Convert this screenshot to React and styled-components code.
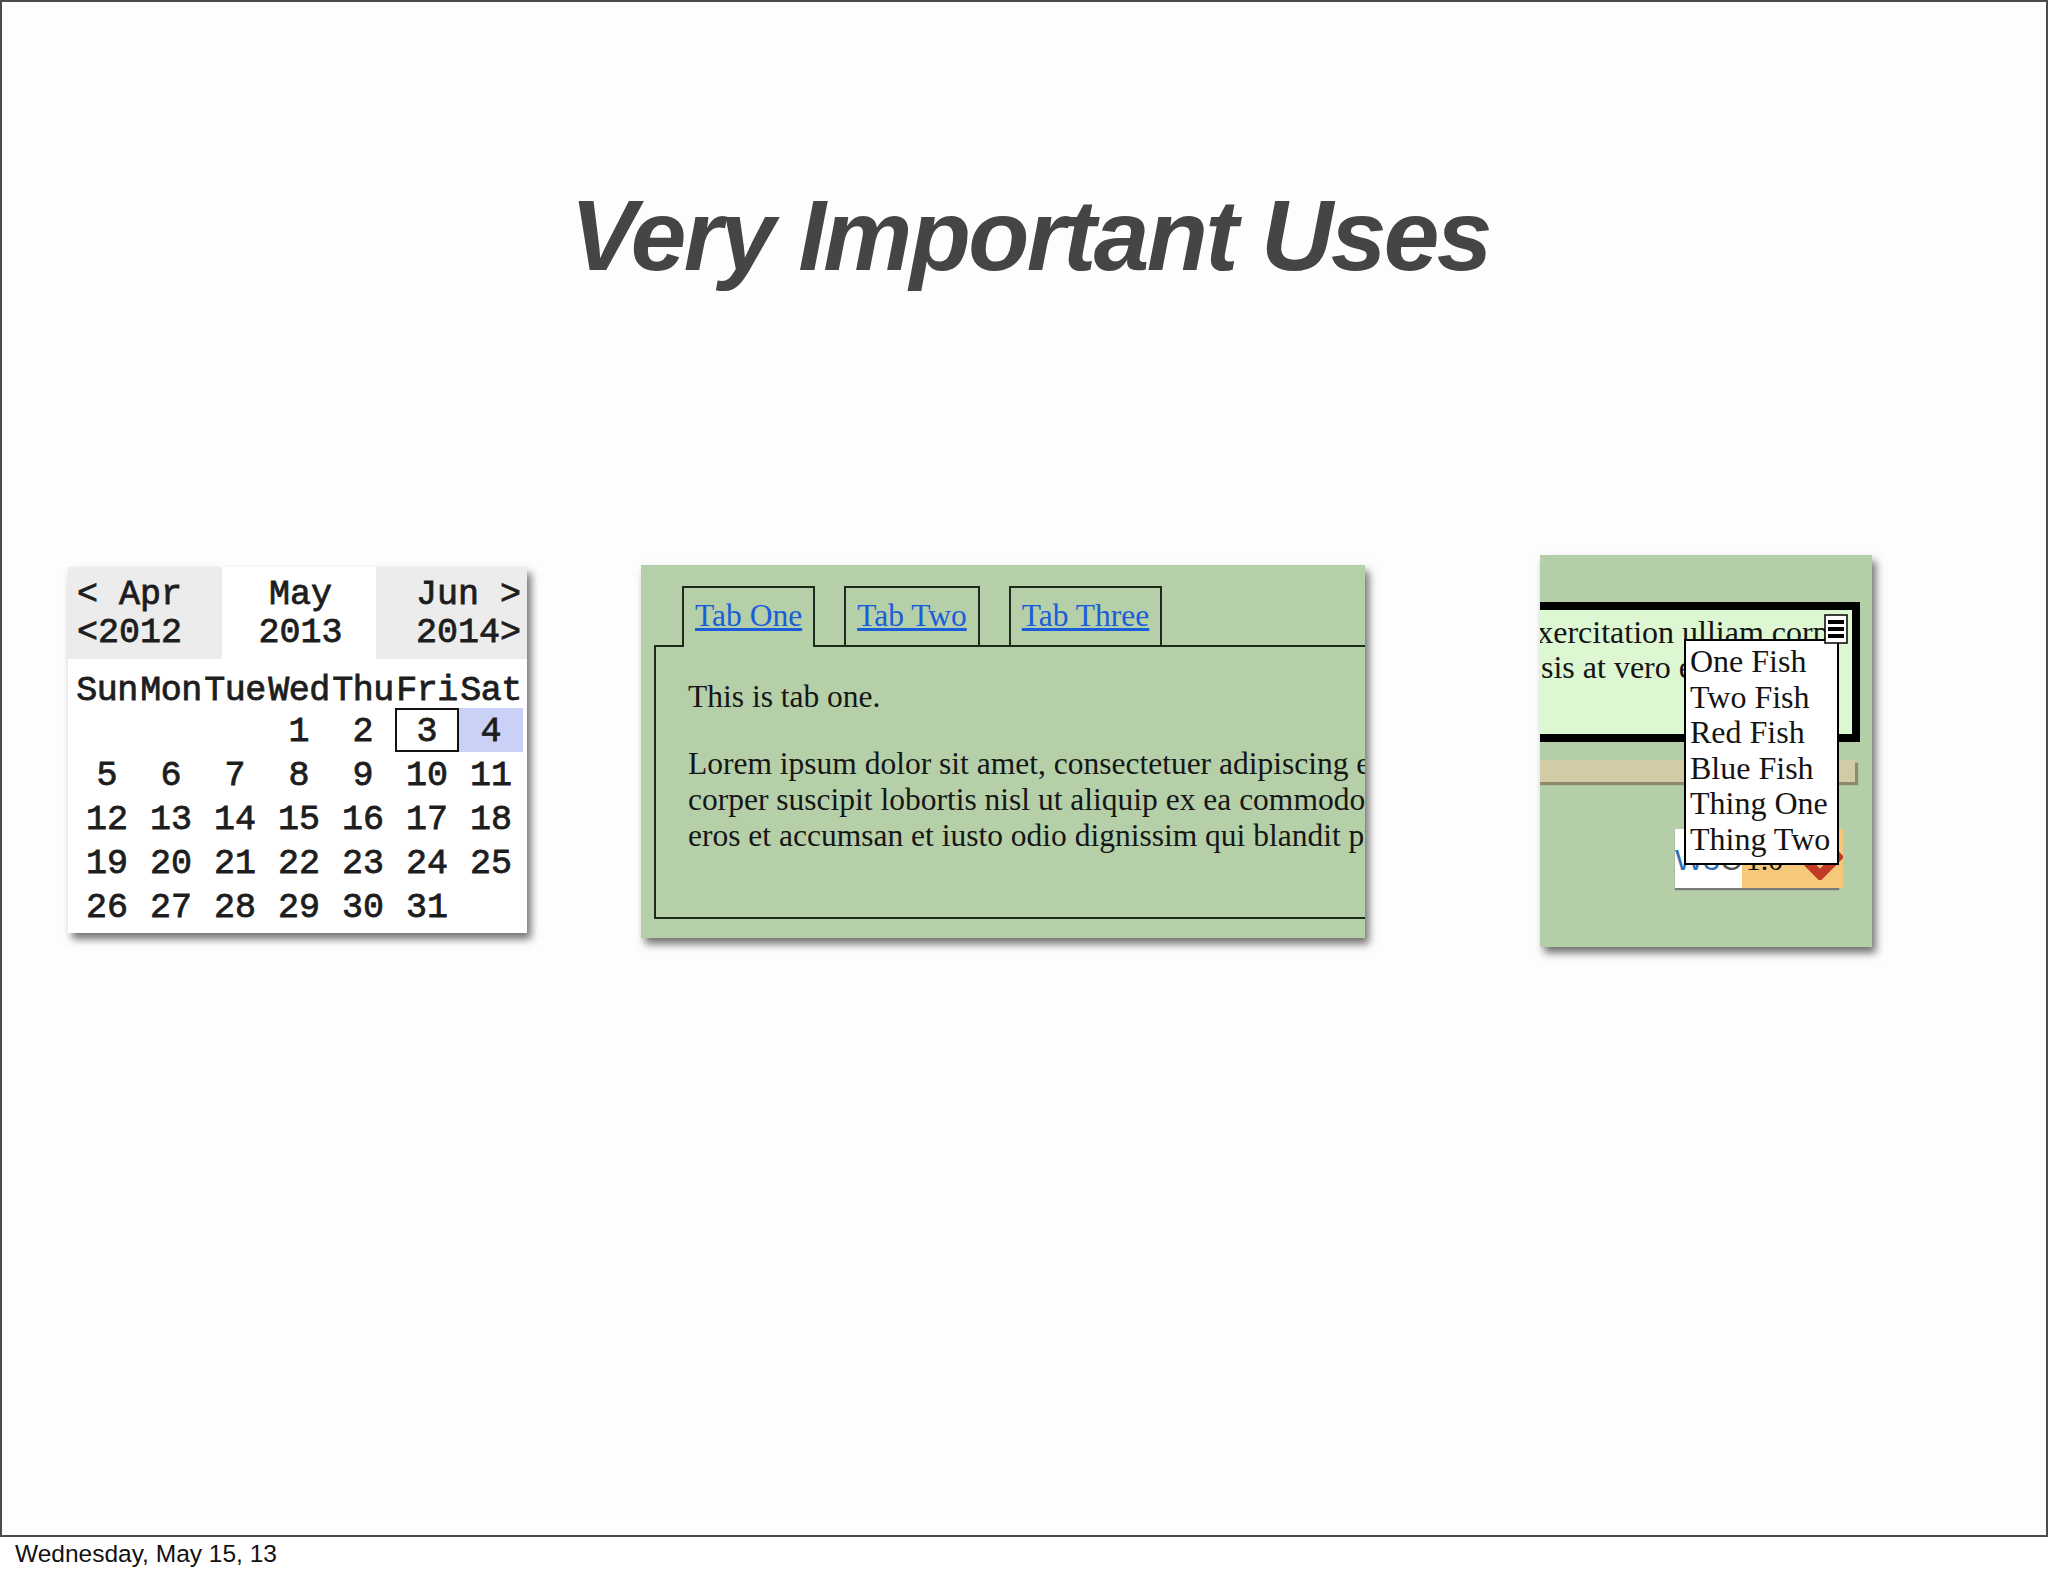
import React from "react";
import styled, { createGlobalStyle } from "styled-components";

const GlobalStyle = createGlobalStyle`
  html, body { margin: 0; padding: 0; background: #ffffff; }
  * { box-sizing: border-box; }
`;

const DAY_NAMES = ["Sun", "Mon", "Tue", "Wed", "Thu", "Fri", "Sat"];
const WEEKS = [
  [null, null, null, 1, 2, 3, 4],
  [5, 6, 7, 8, 9, 10, 11],
  [12, 13, 14, 15, 16, 17, 18],
  [19, 20, 21, 22, 23, 24, 25],
  [26, 27, 28, 29, 30, 31, null],
];
const FISH = ["One Fish", "Two Fish", "Red Fish", "Blue Fish", "Thing One", "Thing Two"];

const App = () => {
  return (
    <Page>
      <GlobalStyle />
      <Slide>
        <Title>Very Important Uses</Title>
        <Showcase>
          <Calendar>
            <CalHeader>
              <MonthCell $align="left">{"< Apr\n<2012"}</MonthCell>
              <MonthCell $align="center" $current>{"May\n2013"}</MonthCell>
              <MonthCell $align="right">{"Jun >\n2014>"}</MonthCell>
            </CalHeader>
            <DayGrid>
              {DAY_NAMES.map((d) => (
                <DayName key={d}>{d}</DayName>
              ))}
              {WEEKS.flat().map((d, i) => (
                <DayCell key={i} $selected={d === 3} $highlight={d === 4}>
                  {d}
                </DayCell>
              ))}
            </DayGrid>
          </Calendar>

          <TabsPanel>
            <TabBar>
              <Tab $active><TabLink href="#one">Tab One</TabLink></Tab>
              <Tab><TabLink href="#two">Tab Two</TabLink></Tab>
              <Tab><TabLink href="#three">Tab Three</TabLink></Tab>
            </TabBar>
            <TabBody>
              <Para>This is tab one.</Para>
              <Para>
                Lorem ipsum dolor sit amet, consectetuer adipiscing elit, sed diam
                <br />
                corper suscipit lobortis nisl ut aliquip ex ea commodo consequat.
                <br />
                eros et accumsan et iusto odio dignissim qui blandit praesent
              </Para>
            </TabBody>
          </TabsPanel>

          <MenuPanel>
            <NoteBox>
              <NoteLine $indent={15}>exercitation ulliam corpe</NoteLine>
              <NoteLine $indent={33}>sis at vero eros</NoteLine>
            </NoteBox>
            <TanBar />
            <Badge>
              <BadgeMark>
                W3<BadgeC>C</BadgeC>
              </BadgeMark>
              <BadgeVersion>
                <span>1.0</span>
                <Diamond width="46" height="46" viewBox="0 0 46 46">
                  <path d="M23 5 L41 23 L23 41 L5 23 Z" fill="none" stroke="#c23a26" strokeWidth="9" />
                </Diamond>
              </BadgeVersion>
            </Badge>
            <Dropdown>
              {FISH.map((f) => (
                <Option key={f}>{f}</Option>
              ))}
            </Dropdown>
            <MenuButton>
              <svg width="24" height="30" viewBox="0 0 24 30">
                <rect x="1" y="1" width="22" height="28" fill="#fff" stroke="#000" strokeWidth="1.5" />
                <rect x="4" y="6" width="16" height="4" fill="#000" />
                <rect x="4" y="13" width="16" height="4" fill="#000" />
                <rect x="4" y="20" width="16" height="4" fill="#000" />
              </svg>
            </MenuButton>
          </MenuPanel>
        </Showcase>
      </Slide>
      <DateLine>Wednesday, May 15, 13</DateLine>
    </Page>
  );
};

export default App;

const Page = styled.div`
  width: 2048px;
  height: 1576px;
  display: flex;
  flex-direction: column;
  background: #ffffff;
  overflow: hidden;
`;

const Slide = styled.section`
  width: 2048px;
  height: 1537px;
  border: 2px solid #4b4b4b;
  background: #fefdfe;
  display: flex;
  flex-direction: column;
  padding-top: 183px;
`;

const Title = styled.h1`
  margin: 0;
  padding-left: 12px;
  font-family: "Liberation Sans", Arial, sans-serif;
  font-weight: bold;
  font-style: italic;
  font-size: 100px;
  line-height: 100px;
  letter-spacing: -2.6px;
  color: #454545;
  text-align: center;
`;

const Showcase = styled.div`
  display: flex;
  align-items: flex-start;
  margin-top: 270px;
  padding-left: 66px;
`;

const Calendar = styled.div`
  margin-top: 12px;
  width: 459px;
  height: 366px;
  background: #ffffff;
  box-shadow: 4px 6px 8px rgba(0, 0, 0, 0.55);
  font-family: "Liberation Mono", "Courier New", monospace;
  font-weight: normal;
  font-size: 35px;
  color: #1d1d1d;
  -webkit-text-stroke: 0.8px #1d1d1d;
`;

const CalHeader = styled.div`
  display: grid;
  grid-template-columns: 154px 154px 151px;
  height: 92px;
`;

const MonthCell = styled.div`
  background: ${(p) => (p.$current ? "#ffffff" : "#ececec")};
  padding: 9px 6px 0 9px;
  text-align: ${(p) => p.$align};
  line-height: 38px;
  white-space: pre;
`;

const DayGrid = styled.div`
  display: grid;
  grid-template-columns: repeat(7, 64px);
  margin-left: 7px;
`;

const DayName = styled.div`
  height: 49px;
  padding-top: 8px;
  line-height: 49px;
  text-align: center;
  letter-spacing: -0.5px;
`;

const DayCell = styled.div`
  height: 44px;
  padding-top: 2px;
  line-height: 44px;
  text-align: center;
  background: ${(p) => (p.$highlight ? "#c9d1f6" : "transparent")};
  box-shadow: ${(p) => (p.$selected ? "inset 0 0 0 2px #111" : "none")};
`;

const TabsPanel = styled.div`
  margin-top: 10px;
  margin-left: 114px;
  width: 724px;
  height: 373px;
  padding: 21px 0 0 13px;
  background: #b5cfa9;
  box-shadow: 4px 6px 8px rgba(0, 0, 0, 0.55);
  overflow: hidden;
  font-family: "Liberation Serif", "Times New Roman", serif;
  font-size: 31.5px;
  line-height: 36px;
  color: #161616;
`;

const TabBar = styled.div`
  display: flex;
  gap: 29px;
  margin-left: 28px;
`;

const Tab = styled.div`
  position: relative;
  z-index: 1;
  height: 61px;
  margin-bottom: -2px;
  padding: 10px 11px 0;
  border: 2px solid #1d2b1d;
  border-bottom: none;
  background: ${(p) => (p.$active ? "#b5cfa9" : "transparent")};
`;

const TabLink = styled.a`
  color: #1a5ddb;
  text-decoration: underline;
  white-space: nowrap;
`;

const TabBody = styled.div`
  width: 780px;
  height: 274px;
  padding: 32px 0 0 32px;
  border: 2px solid #1d2b1d;
  white-space: nowrap;
`;

const Para = styled.p`
  margin: 0 0 31px;
`;

const MenuPanel = styled.div`
  position: relative;
  margin-left: 175px;
  width: 332px;
  height: 392px;
  background: #b4cfa8;
  box-shadow: 4px 6px 8px rgba(0, 0, 0, 0.55);
  overflow: hidden;
  font-family: "Liberation Serif", "Times New Roman", serif;
  font-size: 32px;
  color: #141414;
`;

const NoteBox = styled.div`
  margin: 47px 12px 0 -40px;
  height: 140px;
  padding-top: 5px;
  border: 8px solid #000;
  background: #dcf7d1;
  line-height: 35px;
  white-space: nowrap;
  overflow: hidden;
`;

const NoteLine = styled.div`
  padding-left: ${(p) => p.$indent}px;
`;

const TanBar = styled.div`
  margin: 18px 17px 0 -40px;
  height: 22px;
  background: #d3cba5;
  box-shadow: 3px 3px 1px #8f8a6c;
`;

const Badge = styled.div`
  display: flex;
  margin: 47px 0 0 135px;
  width: 164px;
  height: 59px;
  box-shadow: 0 2px 1px #7a7a7a;
`;

const BadgeMark = styled.div`
  width: 73px;
  padding-top: 13px;
  background: #ffffff;
  font-family: "Liberation Sans", Arial, sans-serif;
  font-size: 30px;
  line-height: 36px;
  color: #2c6fb7;
  text-align: center;
`;

const BadgeC = styled.span`
  color: #555;
`;

const BadgeVersion = styled.div`
  flex: 1;
  display: flex;
  align-items: flex-start;
  gap: 14px;
  padding: 13px 0 0 4px;
  background: #f6c97a;
  font-size: 30px;
  line-height: 36px;
  color: #111;
`;

const Diamond = styled.svg`
  flex: none;
  margin-top: -8px;
`;

const Dropdown = styled.ul`
  position: absolute;
  left: 144px;
  top: 84px;
  width: 155px;
  height: 226px;
  margin: 0;
  padding: 3px 4px 0;
  list-style: none;
  background: #ffffff;
  border: 2px solid #000;
  line-height: 35.5px;
  white-space: nowrap;
`;

const Option = styled.li`
  margin: 0;
`;

const MenuButton = styled.div`
  position: absolute;
  left: 284px;
  top: 59px;
  width: 24px;
  height: 30px;
  line-height: 0;
`;

const DateLine = styled.div`
  padding: 3px 0 0 15px;
  font-family: "Liberation Sans", Arial, sans-serif;
  font-size: 24.5px;
  line-height: 28px;
  color: #111;
`;
